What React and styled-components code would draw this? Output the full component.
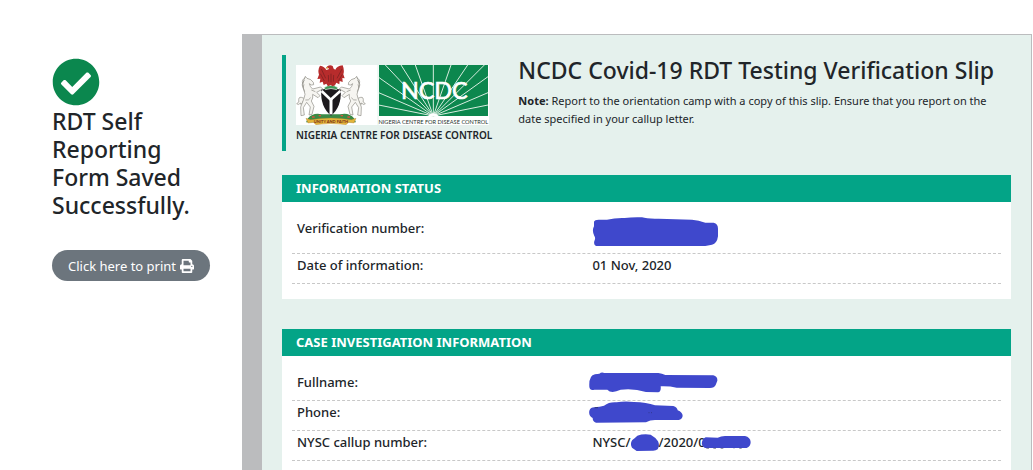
import React from "react";
import styled, { createGlobalStyle } from "styled-components";
import { FaCheckCircle, FaPrint } from "react-icons/fa";

const GlobalStyle = createGlobalStyle`
  * { box-sizing: border-box; }
  body {
    margin: 0;
    background: #fff;
    color: #212529;
    font-family: "Noto Sans", "Open Sans", sans-serif;
    font-size: 13px;
    line-height: 22px;
  }
`;

const Page = styled.div`
  display: flex;
  min-height: 100vh;
  padding: 34px 1px 0 0;
`;

const Sidebar = styled.aside`
  flex: 0 0 242px;
  padding: 24px 32px 0 52px;
`;

const SavedIcon = styled(FaCheckCircle)`
  display: block;
  width: 48px;
  height: 48px;
  color: #0b874e;
`;

const SavedTitle = styled.h1`
  margin: 1px 0 31px;
  font-size: 23px;
  font-weight: 500;
  line-height: 28px;
`;

const PrintButton = styled.button`
  display: inline-flex;
  align-items: center;
  justify-content: center;
  gap: 4px;
  width: 158px;
  height: 31px;
  padding: 0;
  border: 0;
  border-radius: 16px;
  background: #6c757d;
  color: #fff;
  font: inherit;
  white-space: nowrap;
  cursor: pointer;
`;

const Slip = styled.main`
  flex: 1;
  min-width: 0;
  display: flex;
  flex-direction: column;
  padding: 20px 20px 0;
  border: solid #bbbcbe;
  border-width: 1px 1px 0 20px;
  background: #e5f1ed;
`;

const SlipHeader = styled.header`
  display: flex;
  gap: 26px;
  margin-bottom: 24px;
`;

const Brand = styled.div`
  flex: 0 0 208px;
  height: 96px;
  padding: 10px 0 0 10px;
  border-left: 4px solid #03a487;
`;

const Logo = styled.svg`
  display: block;
`;

const BrandName = styled.div`
  font-size: 10px;
  font-weight: 600;
  line-height: 20px;
  white-space: nowrap;
`;

const SlipTitle = styled.h2`
  margin: 0 0 7px;
  font-size: 23px;
  font-weight: 500;
  line-height: 30px;
`;

const Note = styled.p`
  margin: 0;
  padding-right: 12px;
  font-size: 11px;
  line-height: 18px;
`;

const Section = styled.section`
  flex: ${(p) => (p.$fill ? "1" : "none")};
  margin-bottom: ${(p) => (p.$fill ? "0" : "30px")};
  background: #fff;
`;

const SectionTitle = styled.h3`
  margin: 0;
  padding: 0 14px;
  background: #03a487;
  color: #fff;
  font-size: 13px;
  font-weight: 700;
  line-height: 27px;
`;

const Fields = styled.dl`
  margin: 0;
  padding: 15px 10px ${(p) => (p.$flush ? "0" : "15px")};
`;

const Field = styled.div`
  display: grid;
  grid-template-columns: 5fr 7fr;
  padding-bottom: 7px;
  border-bottom: 1px dashed #c8c8c8;
  font-weight: 500;
`;

const Label = styled.dt`
  padding: 0 5px;
`;

const Value = styled.dd`
  display: flex;
  align-items: center;
  margin: 0;
  padding: 0 5px;
`;

const Scribble = styled.svg`
  flex: none;
  fill: #3f48cc;
  margin-left: ${(p) => p.$pull || 0}px;
`;

const rays = [
  [248, 120], [248, 83], [248, 37], [268, 0], [315, 0], [358, 0], [412, 0],
  [465, 0], [515, 0], [565, 0], [576, 35], [576, 83], [576, 120],
];

const Horse = () => (
  <g fill="#f6f5f1" stroke="#8d8b84" strokeWidth="2" strokeLinejoin="round">
    <path d="M24 100 Q8 92 8 104 Q12 112 2 116 Q6 122 14 114 Q12 124 20 112 Q20 106 26 108" />
    <path d="M28 34 L33 40 Q46 42 52 52 L53 59 L46 60 L40 56 Q42 66 50 72 L74 66 L80 72 L62 82 L72 92 L66 98 L50 88 Q52 100 46 108 L54 124 L48 148 L39 150 L43 126 L32 112 L22 128 L25 150 L15 152 L14 126 L24 100 Q30 88 24 76 Q16 60 24 44 Z" />
    <path d="M28 38 Q16 44 20 56 M25 46 Q14 58 22 68 M24 58 Q17 68 26 80 M46 75 L58 80 M28 105 Q38 108 44 98" fill="none" />
  </g>
);

const NcdcLogo = () => (
  <Logo width="193" height="60" viewBox="0 0 579 180" role="img" aria-label="NCDC">
    <rect width="579" height="180" fill="#fff" />
    <g>
      <Horse />
      <g transform="translate(210 0) scale(-1 1)"><Horse /></g>
      <path d="M36 160 Q50 142 78 148 L132 148 Q160 142 174 160 L180 172 L30 172 Z" fill="#3b8a45" />
      <path d="M48 156 h8 M68 152 h7 M134 152 h7 M154 156 h8" stroke="#d9533c" strokeWidth="4" />
      <path d="M30 160 L44 164 Q105 154 166 164 L180 160 L174 174 L158 172 L150 179 Q105 172 60 179 L52 172 L36 174 Z" fill="#e3b53a" stroke="#a8772a" strokeWidth="1" />
      <text x="105" y="174" textAnchor="middle" fontFamily="Lato, sans-serif" fontSize="12" fontWeight="700" fill="#7a2c17">UNITY AND FAITH</text>
      <path d="M76 74 Q105 66 134 74 Q138 124 105 152 Q72 124 76 74 Z" fill="#1d1a1d" />
      <path d="M77 78 L104 104 L133 78" fill="none" stroke="#fff" strokeWidth="8" />
      <path d="M105 101 L105 148" stroke="#fff" strokeWidth="9" />
      <path d="M84 68 Q105 54 126 68 L122 74 Q105 67 88 74 Z" fill="#3f9656" stroke="#e8f1e8" strokeWidth="2" />
      <path d="M94 4 Q102 -2 110 3 L113 11 L118 14 Q122 3 140 1 Q146 16 142 28 L146 40 L139 39 L140 51 L131 48 L130 58 L121 53 L117 61 L110 64 L104 60 L96 64 L91 56 L83 60 L80 50 L71 53 L73 41 L64 42 L69 29 Q64 14 72 2 Q86 4 91 15 L98 13 L98 9 L89 10 Z" fill="#b72c2c" />
      <path d="M76 12 L89 40 M73 26 L85 48 M138 12 L123 40 M139 28 L127 48 M105 26 L105 52 M97 30 L98 50 M113 30 L112 50" stroke="#72201f" strokeWidth="2" />
      <path d="M89 10 L95 5 L96 11 Z" fill="#e8b23d" />
    </g>
    <rect x="243" width="6" height="180" fill="#f1f8f5" />
    <rect x="249" width="327" height="153" fill="#0c874e" />
    <g stroke="#d7ecdf" strokeWidth="3">
      {rays.map(([x, y]) => (
        <line key={`${x}-${y}`} x1="412" y1="153" x2={x} y2={y} />
      ))}
    </g>
    <path d="M396 153 Q402 146 412 145 Q422 146 428 153 Z" fill="#fff" />
    <g fontFamily="Lato, sans-serif" textAnchor="middle">
      <text x="415" y="102" fontSize="70" fill="#fff" stroke="#fff" strokeWidth="2">NCDC</text>
      <text x="412" y="178" fontSize="17" fill="#26352e">NIGERIA CENTRE FOR DISEASE CONTROL</text>
    </g>
  </Logo>
);

const VerificationMark = () => (
  <Scribble width="126" height="29" viewBox="0 0 378 87" aria-hidden="true">
    <path d="M6 14 Q8 8 20 8 L45 8 Q70 2 98 3 Q120 0 150 1 Q165 6 200 5 L300 8 Q320 10 340 17 L365 17 Q378 20 378 35 L378 58 Q375 80 360 83 L340 87 L12 87 Q3 82 8 70 Q11 62 7 57 Q-1 40 6 28 Z" />
  </Scribble>
);

const NameMark = () => (
  <Scribble $pull={-3} width="130" height="21" viewBox="27 10 390 63" aria-hidden="true">
    <path d="M58 15 Q65 9 73 13 L235 13 Q246 14 256 19 L400 20 Q413 23 412 36 L407 49 Q403 58 390 58 L290 57 Q268 52 242 53 Q244 70 234 71 L198 70 Q160 58 122 63 Q108 69 98 70 Q88 70 82 63 L43 63 Q30 67 28 55 Q26 20 45 17 Z" />
  </Scribble>
);

const PhoneMark = () => (
  <Scribble $pull={-3} width="95" height="22" viewBox="27 93 285 66" aria-hidden="true">
    <path d="M43 112 Q60 110 72 107 Q88 95 110 97 Q135 92 162 96 Q200 97 225 106 L280 108 Q292 112 293 121 Q308 127 308 138 Q306 149 296 150 L225 150 Q210 150 198 157 L48 158 Q38 155 38 144 Q25 138 28 122 Q32 112 43 112 Z" />
    <path d="M44 113 h10 M206 128 h2 M213 128 h2" stroke="#20264f" strokeWidth="2" />
  </Scribble>
);

const BatchMark = () => (
  <Scribble width="28" height="17" viewBox="159 189 84 51" aria-hidden="true">
    <path d="M178 194 Q195 188 218 191 Q233 199 240 211 Q246 224 239 235 Q233 240 222 239 L176 240 Q168 234 162 230 Q155 218 163 207 Q170 202 178 194 Z" />
  </Scribble>
);

const SerialMark = () => (
  <Scribble $pull={-5} width="50" height="17" viewBox="368 187 150 51" aria-hidden="true">
    <path d="M382 197 L418 198 Q428 193 440 193 L500 193 Q516 197 517 211 Q517 225 505 229 L380 229 Q368 222 371 210 Q373 200 382 197 Z" />
    <path d="M384 230 h8 M405 230 h8 M427 230 h8 M466 230 h2 M483 230 h7" stroke="#4a4d63" strokeWidth="2" />
  </Scribble>
);

const Row = ({ label, children }) => (
  <Field>
    <Label>{label}</Label>
    <Value>{children}</Value>
  </Field>
);

export default function App() {
  return (
    <>
      <GlobalStyle />
      <Page>
        <Sidebar>
          <SavedIcon aria-hidden="true" />
          <SavedTitle>RDT Self Reporting Form Saved Successfully.</SavedTitle>
          <PrintButton type="button" onClick={() => window.print()}>
            Click here to print <FaPrint size={14} aria-hidden="true" />
          </PrintButton>
        </Sidebar>
        <Slip>
          <SlipHeader>
            <Brand>
              <NcdcLogo />
              <BrandName>NIGERIA CENTRE FOR DISEASE CONTROL</BrandName>
            </Brand>
            <div>
              <SlipTitle>NCDC Covid-19 RDT Testing Verification Slip</SlipTitle>
              <Note>
                <b>Note:</b> Report to the orientation camp with a copy of this slip. Ensure
                that you report on the date specified in your callup letter.
              </Note>
            </div>
          </SlipHeader>
          <Section>
            <SectionTitle>INFORMATION STATUS</SectionTitle>
            <Fields>
              <Row label="Verification number:"><VerificationMark /></Row>
              <Row label="Date of information:">01 Nov, 2020</Row>
            </Fields>
          </Section>
          <Section $fill>
            <SectionTitle>CASE INVESTIGATION INFORMATION</SectionTitle>
            <Fields $flush>
              <Row label="Fullname:"><NameMark /></Row>
              <Row label="Phone:"><PhoneMark /></Row>
              <Row label="NYSC callup number:">
                NYSC/<BatchMark />/2020/0<SerialMark />
              </Row>
            </Fields>
          </Section>
        </Slip>
      </Page>
    </>
  );
}
